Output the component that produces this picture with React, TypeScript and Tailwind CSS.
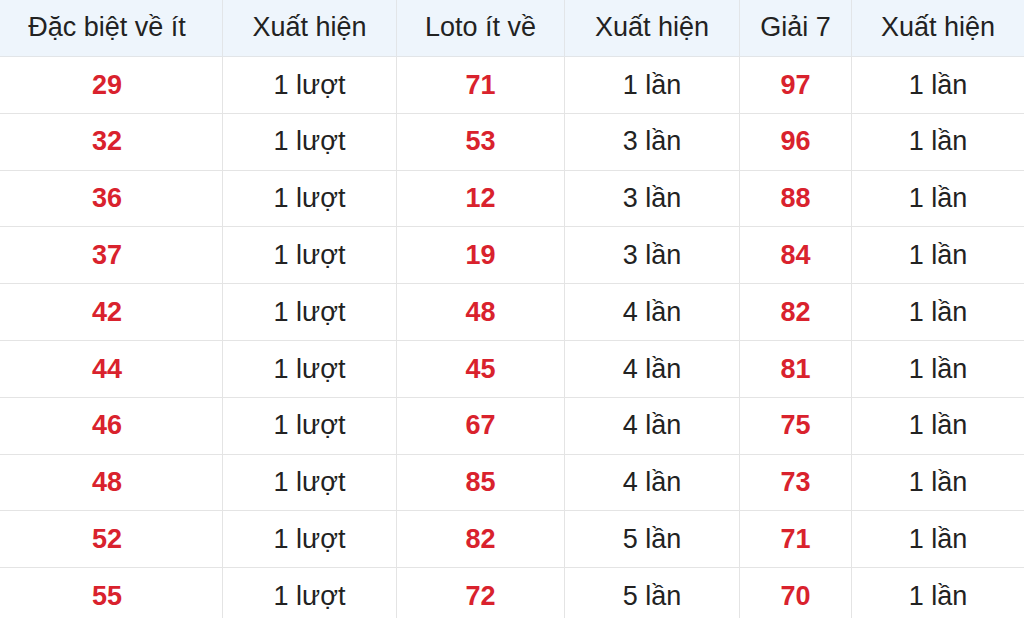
const headers = ["Đặc biệt về ít", "Xuất hiện", "Loto ít về", "Xuất hiện", "Giải 7", "Xuất hiện"];

const rows: [string, string, string, string, string, string][] = [
  ["29", "1 lượt", "71", "1 lần", "97", "1 lần"],
  ["32", "1 lượt", "53", "3 lần", "96", "1 lần"],
  ["36", "1 lượt", "12", "3 lần", "88", "1 lần"],
  ["37", "1 lượt", "19", "3 lần", "84", "1 lần"],
  ["42", "1 lượt", "48", "4 lần", "82", "1 lần"],
  ["44", "1 lượt", "45", "4 lần", "81", "1 lần"],
  ["46", "1 lượt", "67", "4 lần", "75", "1 lần"],
  ["48", "1 lượt", "85", "4 lần", "73", "1 lần"],
  ["52", "1 lượt", "82", "5 lần", "71", "1 lần"],
  ["55", "1 lượt", "72", "5 lần", "70", "1 lần"],
];

const cols = "grid grid-cols-[223px_174px_168px_175px_112px_172px]";

export default function App() {
  return (
    <div className="w-[1024px] h-[618px] overflow-hidden bg-white font-['Liberation_Sans',Arial,sans-serif] text-[27px] text-[#222]">
      {/* Header */}
      <div className={`${cols} h-[57px] bg-[#eef5fc] border-b border-[#e2e5e8]`}>
        {headers.map((h, i) => (
          <div
            key={i}
            className="flex items-center justify-center border-r border-[#e2e5e8] last:border-r-0 first:pr-2 pb-[2px]"
          >
            {h}
          </div>
        ))}
      </div>

      {/* Body */}
      {rows.map((r, ri) => (
        <div key={ri} className={`${cols} h-[56.8px] border-b border-[#e4e4e4]`}>
          {r.map((c, ci) => (
            <div
              key={ci}
              className={`flex items-center justify-center border-r border-[#e4e4e4] last:border-r-0 first:pr-2 ${
                ci % 2 === 0 ? "font-bold text-[#d9222d]" : ""
              }`}
            >
              {c}
            </div>
          ))}
        </div>
      ))}
    </div>
  );
}
